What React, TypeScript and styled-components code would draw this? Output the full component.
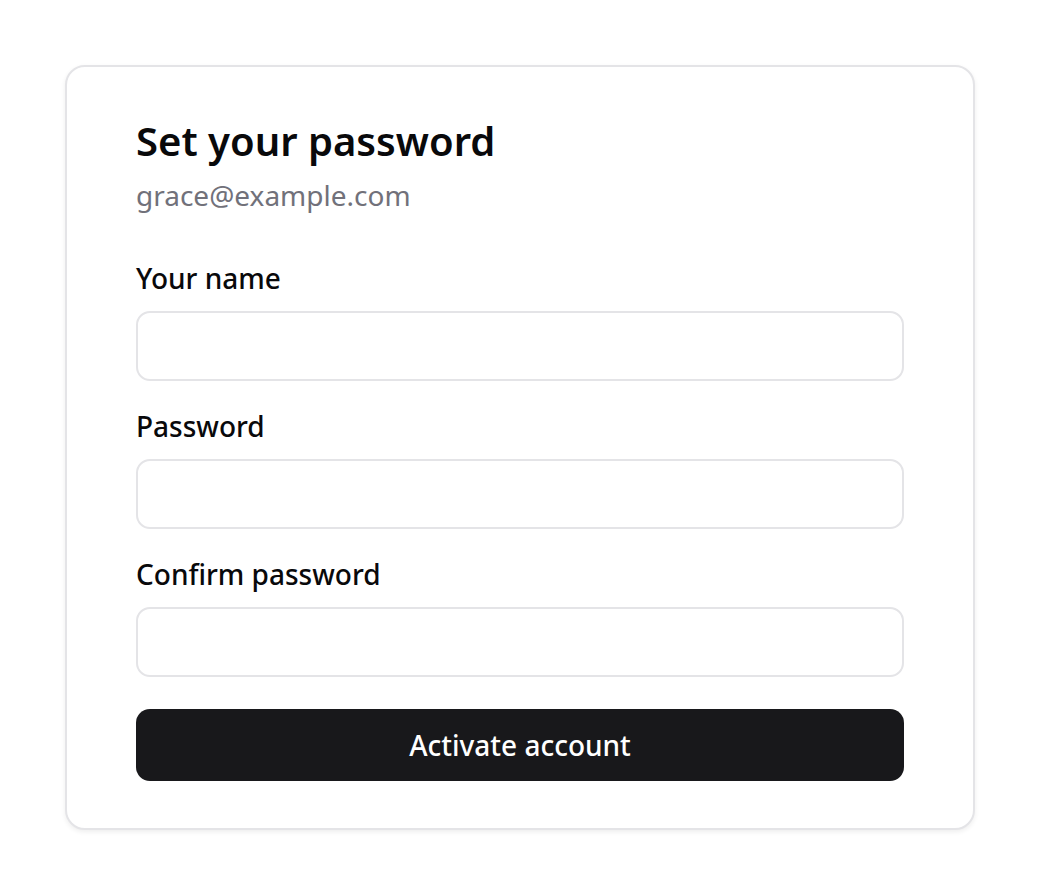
import React from "react";
import styled, { createGlobalStyle } from "styled-components";

const GlobalStyle = createGlobalStyle`
  * { box-sizing: border-box; }
  body {
    margin: 0;
    background: #ffffff;
    font-family: "Noto Sans", "Open Sans", sans-serif;
    color: #09090b;
  }
`;

const Page = styled.div`
  padding: 65px;
`;

const Card = styled.form`
  background: #ffffff;
  border: 2px solid #e4e4e7;
  border-radius: 20px;
  box-shadow: 0 2px 5px rgba(0, 0, 0, 0.07);
  padding: 50px 69px 47px;
  display: flex;
  flex-direction: column;
`;

const Title = styled.h1`
  margin: 0;
  font-size: 40px;
  line-height: 48px;
  font-weight: 600;
  color: #09090b;
`;

const Email = styled.div`
  margin-top: 9px;
  font-size: 28px;
  line-height: 42px;
  color: #71717a;
`;

const Fields = styled.div`
  margin-top: 41px;
  display: flex;
  flex-direction: column;
  gap: 24px;
`;

const Field = styled.label`
  display: flex;
  flex-direction: column;
  gap: 12px;
`;

const Label = styled.span`
  font-size: 28px;
  line-height: 42px;
  font-weight: 500;
  color: #09090b;
`;

const Input = styled.input`
  height: 70px;
  width: 100%;
  border: 2px solid #e4e4e7;
  border-radius: 14px;
  background: #ffffff;
  padding: 0 20px;
  font-family: inherit;
  font-size: 28px;
  outline: none;
`;

const Button = styled.button`
  margin-top: 32px;
  height: 72px;
  border: none;
  border-radius: 14px;
  background: #18181b;
  color: #ffffff;
  font-family: inherit;
  font-size: 28px;
  font-weight: 500;
  cursor: pointer;
`;

const fields = [
  { label: "Your name", type: "text" },
  { label: "Password", type: "password" },
  { label: "Confirm password", type: "password" },
];

const App = () => {
  return (
    <Page>
      <GlobalStyle />
      <Card onSubmit={(e) => e.preventDefault()}>
        <Title>Set your password</Title>
        <Email>grace@example.com</Email>
        <Fields>
          {fields.map((f) => (
            <Field key={f.label}>
              <Label>{f.label}</Label>
              <Input type={f.type} />
            </Field>
          ))}
        </Fields>
        <Button type="submit">Activate account</Button>
      </Card>
    </Page>
  );
};

export default App;
